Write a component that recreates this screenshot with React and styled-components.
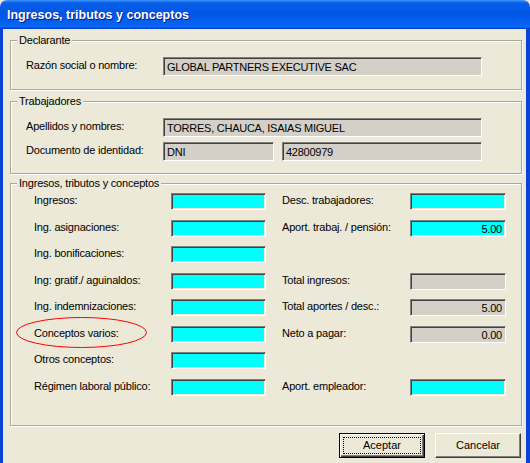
import React from 'react';
import styled, { createGlobalStyle } from 'styled-components';

const Global = createGlobalStyle`
  html, body { margin: 0; padding: 0; background: #ECE9D8; }
  body { font-family: "Liberation Sans", Arial, sans-serif; }
  #root { width: 530px; height: 463px; }
`;

const Window = styled.div`
  position: relative;
  width: 530px;
  height: 463px;
  display: flex;
  flex-direction: column;
  overflow: hidden;
`;

const TitleBar = styled.div`
  flex: none;
  height: 29px;
  display: flex;
  align-items: center;
  padding-left: 7px;
  background: linear-gradient(180deg, #3d95ff 0%, #0a5fe8 10%, #0055e5 45%, #0663f2 85%, #0b6af8 92%, #0148d6 97%, #003cc8 100%);
  border-radius: 7px 7px 0 0;
  color: #fff;
  font: bold 12.5px "Liberation Sans", Arial, sans-serif;
  text-shadow: 1px 1px 0 #0a1883;
`;

const Frame = styled.div`
  flex: 1;
  display: flex;
  flex-direction: column;
  background: #ECE9D8;
  border-left: 3px solid #0842da;
  border-right: 4px solid #0842da;
  padding: 5px 4px 0 7px;
`;

const Group = styled.fieldset`
  margin: ${p => p.$mt}px 0 0 0;
  padding: ${p => p.$pt}px 0 ${p => p.$pb}px 0;
  width: 512px;
  box-sizing: border-box;
  min-width: 0;
  border: 1px solid #aca899;
  box-shadow: inset 1px 1px 0 #fff, 1px 1px 0 #fff;
`;

const Legend = styled.legend`
  margin-left: 6px;
  padding: 0 2px;
  font-size: 11px;
  line-height: 13px;
  color: #000;
  background: #ECE9D8;
  letter-spacing: -0.2px;
`;

const FormGrid = styled.div`
  display: grid;
  padding-left: ${p => p.$pl}px;
  grid-template-columns: ${p => p.$cols};
  row-gap: ${p => p.$rgap}px;
  align-items: center;
`;

const Label = styled.div`
  font-size: 11px;
  line-height: 13px;
  color: #000;
  letter-spacing: -0.2px;
  padding-left: ${p => p.$pl || 0}px;
  margin-top: -2px;
  white-space: nowrap;
`;

const Field = styled.div`
  height: ${p => p.$h}px;
  box-sizing: border-box;
  grid-column: ${p => p.$span || 'auto'};
  margin-left: ${p => p.$ml || 0}px;
  display: flex;
  align-items: center;
  justify-content: ${p => (p.$right ? 'flex-end' : 'flex-start')};
  padding: 1px 3px 0 3px;
  background: ${p => (p.$cyan ? '#00ffff' : '#d4d0c8')};
  border-style: solid;
  border-width: 1px;
  border-color: #808080 #fff #fff #808080;
  box-shadow: inset 1px 1px 0 #404040, inset -1px -1px 0 ${p => (p.$cyan ? '#ece9d8' : '#d4d0c8')};
  font-size: 11px;
  letter-spacing: -0.25px;
  color: #000;
  white-space: nowrap;
`;

const ButtonRow = styled.div`
  display: flex;
  justify-content: flex-end;
  gap: 10px;
  margin-top: 7px;
  padding-right: 1px;
  width: 512px;
  box-sizing: border-box;
`;

const Button = styled.button`
  width: 86px;
  height: 25px;
  box-sizing: border-box;
  display: flex;
  padding: 2px;
  margin: 0;
  background: #ece9d8;
  border: 1px solid;
  border-color: ${p => (p.$default ? '#000' : '#fff #404040 #404040 #fff')};
  box-shadow: ${p => (p.$default
    ? 'inset 1px 1px 0 #fff, inset -1px -1px 0 #404040, inset -2px -2px 0 #808080'
    : 'inset -1px -1px 0 #808080')};
  font: 11px "Liberation Sans", Arial, sans-serif;
  color: #000;
`;

const ButtonFace = styled.span`
  flex: 1;
  display: flex;
  align-items: center;
  justify-content: center;
  border: 1px dotted ${p => (p.$focus ? '#000' : 'transparent')};
  margin: ${p => (p.$focus ? '1px' : '0')};
`;

const Ellipse = styled.svg`
  position: absolute;
  left: 15px;
  top: 316px;
  pointer-events: none;
`;

const leftRows = [
  'Ingresos:',
  'Ing. asignaciones:',
  'Ing. bonificaciones:',
  'Ing: gratif./ aguinaldos:',
  'Ing. indemnizaciones:',
  'Conceptos varios:',
  'Otros conceptos:',
  'Régimen laboral público:',
];

const rightRows = [
  { label: 'Desc. trabajadores:', value: '', cyan: true },
  { label: 'Aport. trabaj. / pensión:', value: '5.00', cyan: true },
  null,
  { label: 'Total ingresos:', value: '', cyan: false },
  { label: 'Total aportes / desc.:', value: '5.00', cyan: false },
  { label: 'Neto a pagar:', value: '0.00', cyan: false },
  null,
  { label: 'Aport. empleador:', value: '', cyan: true },
];

export default function App() {
  return (
    <>
      <Global />
      <Window>
        <TitleBar>Ingresos, tributos y conceptos</TitleBar>
        <Frame>
          <Group $mt={0} $pt={10} $pb={13}>
            <Legend>Declarante</Legend>
            <FormGrid $pl={15} $cols="137px 319px" $rgap={0}>
              <Label>Razón social o nombre:</Label>
              <Field $h={19}>GLOBAL PARTNERS EXECUTIVE SAC</Field>
            </FormGrid>
          </Group>

          <Group $mt={5} $pt={10} $pb={12}>
            <Legend>Trabajadores</Legend>
            <FormGrid $pl={15} $cols="137px 111px 208px" $rgap={5}>
              <Label>Apellidos y nombres:</Label>
              <Field $h={19} $span="2 / 4">TORRES, CHAUCA, ISAIAS MIGUEL</Field>
              <Label>Documento de identidad:</Label>
              <Field $h={19}>DNI</Field>
              <Field $h={19} $ml={8}>42800979</Field>
            </FormGrid>
          </Group>

          <Group $mt={3} $pt={3} $pb={29}>
            <Legend>Ingresos, tributos y conceptos</Legend>
            <FormGrid $pl={23} $cols="137px 95px 144px 96px" $rgap={9.5}>
              {leftRows.map((l, i) => {
                const r = rightRows[i];
                return (
                  <React.Fragment key={l}>
                    <Label>{l}</Label>
                    <Field $h={17} $cyan />
                    {r ? <Label $pl={16}>{r.label}</Label> : <div />}
                    {r ? <Field $h={17} $cyan={r.cyan} $right>{r.value}</Field> : <div />}
                  </React.Fragment>
                );
              })}
            </FormGrid>
          </Group>

          <ButtonRow>
            <Button $default><ButtonFace $focus>Aceptar</ButtonFace></Button>
            <Button><ButtonFace>Cancelar</ButtonFace></Button>
          </ButtonRow>
        </Frame>
        <Ellipse width="133" height="33" viewBox="0 0 133 33">
          <ellipse cx="66.5" cy="16.5" rx="65" ry="15" fill="none" stroke="#ff0000" strokeWidth="1" />
        </Ellipse>
      </Window>
    </>
  );
}
